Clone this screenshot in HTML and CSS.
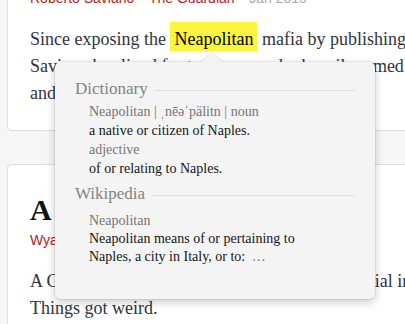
FILE: index.html
```html
<!DOCTYPE html>
<html lang="en">
<head>
  <meta charset="UTF-8" />
  <meta name="viewport" content="width=device-width, initial-scale=1.0" />
  <title>Reading List</title>
  <link rel="stylesheet" href="styles.css">
</head>
<body>
  <div class="feed">
    <article class="card">
      <h2 class="card-title">Gomorrah, ten years on</h2>
      <div class="meta">
        <span class="by">Roberto Saviano</span><span class="dot">·</span><span class="by">The Guardian</span><span class="dot">·</span><span class="date">Jan 2015</span>
      </div>
      <p class="excerpt">Since exposing the <mark class="hl">Neapolitan</mark> mafia by publishing Gomorrah,<br>Saviano has lived for ten years under heavily armed guard<br>and in hiding.</p>
    </article>

    <article class="card">
      <h2 class="card-title">A Game of Bots</h2>
      <div class="meta">
        <span class="by">Wyatt Mason</span><span class="dot">·</span><span class="by">The New York Times</span><span class="dot">·</span><span class="date">Mar 2015</span>
      </div>
      <p class="excerpt">A Game of Thrones fan tried to build an unofficial internet<br>Things got weird.</p>
    </article>
  </div>

  <!-- look up popover -->
  <div class="lookup">
    <section class="lookup-group">
      <h3 class="lookup-head">Dictionary</h3>
      <div class="entry">
        <div class="entry-word">Neapolitan | ˌnēəˈpälitn | noun</div>
        <div class="entry-text">a native or citizen of Naples.</div>
        <div class="entry-word">adjective</div>
        <div class="entry-text">of or relating to Naples.</div>
      </div>
    </section>
    <section class="lookup-group wiki">
      <h3 class="lookup-head">Wikipedia</h3>
      <div class="entry">
        <div class="entry-word">Neapolitan</div>
        <div class="entry-text">Neapolitan means of or pertaining to</div>
        <div class="entry-text">Naples, a city in Italy, or to: <span class="more">…</span></div>
      </div>
    </section>
  </div>
</body>
</html>
```

FILE: styles.css
```css
html, body {
  overflow: hidden;
}
body {
  margin: 0;
  font-family: "Liberation Serif", "DejaVu Serif", serif;
  background-color: #f6f6f6;
  color: #30343a;
}
.feed {
  width: 700px;
  margin-top: -78px;
  padding-left: 7px;
}
.card {
  background: #ffffff;
  border: 1px solid #dddddd;
  border-radius: 4px;
  padding: 27px 22px 23px;
  margin-bottom: 33px;
}
.card-title {
  margin: 0 0 2px;
  font-size: 30px;
  line-height: 36px;
  font-weight: bold;
  color: #111;
}
.meta {
  font-family: "Liberation Sans", Arial, sans-serif;
  font-size: 14px;
  line-height: 20px;
  margin-bottom: 18px;
  white-space: nowrap;
}
.meta .by {
  color: #b01c1c;
}
.meta .dot {
  color: #999;
  margin: 0 5px;
}
.meta .date {
  color: #aaa;
}
.excerpt {
  margin: 0;
  font-size: 18px;
  line-height: 27px;
  white-space: nowrap;
}
.hl {
  background: #fbf53f;
  color: #000;
  padding: 7px 4px 2px;
}

.lookup {
  position: absolute;
  left: 55px;
  top: 62px;
  width: 320px;
  height: 237px;
  box-sizing: border-box;
  padding: 17px 20px 0;
  background: #f4f4f4;
  border-radius: 6px;
  box-shadow: 0 3px 10px rgba(0, 0, 0, 0.22), 0 0 0 1px rgba(0, 0, 0, 0.06);
}
.lookup::before {
  content: "";
  position: absolute;
  left: 150px;
  top: -7px;
  width: 14px;
  height: 14px;
  background: #f4f4f4;
  transform: rotate(45deg);
  box-shadow: -1px -1px 2px rgba(0, 0, 0, 0.08);
}
.lookup-head {
  display: flex;
  align-items: center;
  gap: 7px;
  margin: 0 0 3px;
  font-size: 17px;
  line-height: 20px;
  font-weight: normal;
  color: #838383;
}
.lookup-head::after {
  content: "";
  flex: 1;
  height: 1px;
  margin-top: 3px;
  background: #dedede;
}
.wiki {
  margin-top: 6px;
}
.wiki .lookup-head {
  margin-bottom: 8px;
}
.entry {
  padding-left: 14px;
  font-size: 14px;
  line-height: 19px;
}
.wiki .entry {
  line-height: 18px;
}
.entry-word {
  color: #747474;
}
.entry-text {
  color: #141414;
}
.more {
  color: #777;
  margin-left: 3px;
}
```
